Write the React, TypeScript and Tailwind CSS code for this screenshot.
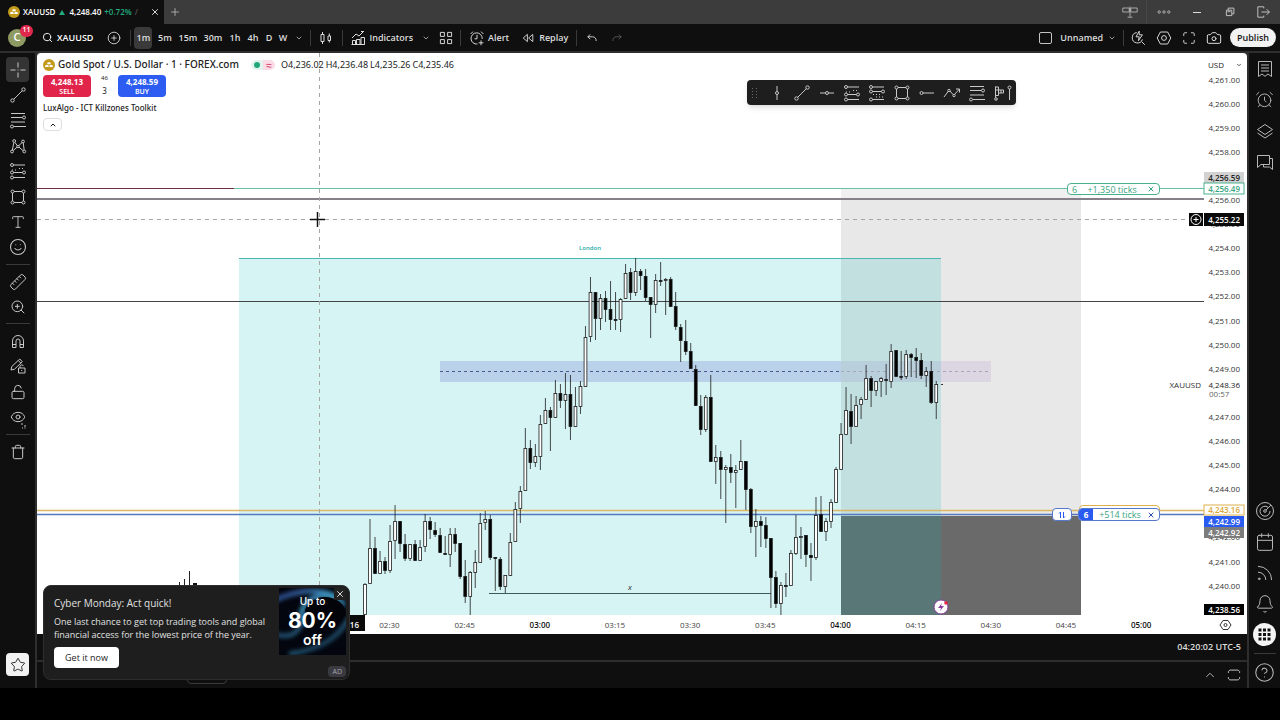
import type { ReactNode } from "react";
import {
  AlarmClock,
  Bell,
  Calendar,
  Camera,
  ChevronDown,
  ChevronUp,
  CircleHelp,
  CirclePlus,
  Eye,
  LockOpen,
  Maximize,
  Plus,
  Rss,
  Ruler,
  Search,
  Smile,
  Star,
  Trash,
  Type,
  X,
  ZoomIn,
} from "lucide-react";

// high, body top, body bottom, low, 1 = filled
type Candle = [number, number, number, number, 0 | 1];

const FIRST_X = 364.5;
const STEP = 5.011;

// one per minute from 02:25
const CANDLES: Candle[] = [
  [583, 584, 615, 615, 0], [519, 548, 584, 584, 0], [537, 548, 574, 574, 1], [551, 561, 574, 574, 0],
  [557, 561, 571, 574, 1], [525, 541, 571, 573, 0], [505, 521, 541, 559, 0], [521, 521, 544, 552, 1],
  [534, 544, 559, 561, 1], [544, 544, 559, 561, 0], [540, 544, 561, 561, 1], [540, 547, 561, 561, 0],
  [514, 521, 547, 552, 0], [517, 521, 530, 539, 1], [522, 530, 535, 537, 1], [528, 535, 553, 553, 1],
  [536, 553, 555, 555, 1], [528, 534, 555, 567, 0], [528, 534, 544, 552, 1], [543, 543, 577, 579, 1],
  [560, 576, 597, 603, 1], [571, 572, 597, 615, 0], [550, 562, 573, 588, 0], [513, 523, 563, 563, 0],
  [511, 519, 523, 530, 0], [515, 519, 558, 560, 1], [557, 557, 559, 591, 1], [557, 559, 587, 590, 1],
  [575, 575, 587, 593, 0], [533, 542, 576, 576, 0], [502, 509, 542, 542, 0], [486, 491, 509, 523, 0],
  [428, 448, 491, 491, 0], [440, 448, 463, 469, 1], [444, 456, 463, 467, 0], [415, 424, 457, 470, 0],
  [398, 410, 424, 424, 0], [407, 410, 418, 451, 1], [380, 393, 418, 418, 0], [384, 393, 401, 408, 1],
  [373, 394, 401, 429, 0], [375, 394, 427, 440, 1], [387, 406, 427, 427, 0], [381, 386, 407, 414, 0],
  [326, 337, 387, 387, 0], [277, 292, 337, 342, 0], [292, 292, 319, 340, 1], [294, 298, 319, 330, 0],
  [291, 298, 310, 322, 1], [281, 309, 320, 330, 1], [292, 319, 321, 330, 1], [298, 299, 320, 332, 0],
  [264, 273, 299, 299, 0], [268, 272, 293, 300, 1], [258, 271, 293, 296, 0], [269, 271, 276, 290, 1],
  [269, 276, 298, 301, 1], [297, 297, 305, 338, 1], [274, 280, 305, 313, 0], [262, 280, 281, 286, 1],
  [278, 279, 281, 315, 0], [277, 279, 307, 307, 1], [292, 306, 327, 330, 1], [324, 327, 341, 362, 1],
  [320, 341, 352, 355, 1], [343, 351, 369, 369, 1], [365, 369, 406, 406, 1], [395, 406, 430, 435, 1],
  [395, 397, 430, 432, 0], [375, 397, 462, 462, 1], [445, 457, 462, 484, 0], [451, 457, 470, 499, 1],
  [465, 467, 470, 523, 0], [454, 467, 473, 483, 1], [465, 470, 473, 508, 0], [440, 461, 470, 470, 0],
  [461, 461, 490, 510, 1], [488, 489, 527, 533, 1], [509, 521, 527, 557, 0], [516, 521, 526, 547, 1],
  [517, 525, 539, 548, 1], [538, 538, 578, 608, 1], [571, 577, 604, 608, 1], [582, 585, 604, 615, 0],
  [573, 585, 586, 597, 1], [550, 553, 586, 586, 0], [515, 537, 554, 555, 0], [527, 536, 538, 559, 0],
  [535, 535, 555, 567, 1], [543, 555, 558, 581, 1], [497, 515, 558, 560, 0], [496, 514, 532, 532, 1],
  [518, 521, 532, 541, 0], [499, 502, 522, 528, 0], [467, 469, 503, 503, 0], [423, 434, 470, 470, 0],
  [387, 410, 435, 435, 0], [394, 411, 427, 444, 1], [396, 405, 427, 427, 0], [397, 399, 405, 419, 0],
  [365, 378, 400, 400, 0], [376, 378, 391, 407, 1], [381, 381, 391, 396, 0], [377, 378, 382, 397, 0],
  [364, 379, 381, 395, 1], [344, 351, 382, 388, 0], [350, 350, 377, 377, 1], [351, 376, 377, 380, 1],
  [350, 354, 377, 379, 0], [353, 354, 358, 377, 1], [348, 357, 361, 378, 1], [353, 360, 376, 379, 1],
  [367, 371, 376, 387, 0], [361, 371, 403, 404, 1], [381, 384, 403, 419, 0],
];

const TIMES = ["02:30", "02:45", "03:00", "03:15", "03:30", "03:45", "04:00", "04:15", "04:30", "04:45", "05:00"];

const PRICES = [
  4261, 4260, 4259, 4258, 4256, 4255, 4254, 4253, 4252, 4251, 4250, 4249, 4247, 4246, 4245, 4244, 4242, 4241, 4240,
];

const priceY = (p: number) => 79.5 + (4261 - p) * 24.1;
const priceText = (p: number) => `4,${p - 4000}.00`;

function Glyph({ children, className = "size-5" }: { children: ReactNode; className?: string }) {
  return (
    <svg viewBox="0 0 20 20" className={`shrink-0 ${className}`} fill="none" stroke="currentColor" strokeWidth="1">
      {children}
    </svg>
  );
}

const CrossGlyph = () => (
  <Glyph><path d="M10 2.5v5M10 12.5v5M2.5 10h5M12.5 10h5M9.5 10h1" /></Glyph>
);
const TrendGlyph = () => (
  <Glyph>
    <circle cx="4.5" cy="15.5" r="1.7" /><circle cx="15.5" cy="4.5" r="1.7" /><path d="M5.7 14.3 14.3 5.7" />
  </Glyph>
);
const FibGlyph = () => (
  <Glyph>
    <path d="M3 3.5h14M3 7.5h11.3M3 12h14M5.7 16.5H18" /><circle cx="16" cy="7.5" r="1.5" /><circle cx="4" cy="16.5" r="1.5" />
  </Glyph>
);
const PatternGlyph = () => (
  <Glyph>
    <path d="m4.3 14.2 1.5-7.5M7 6.5l2.3 3.2M10.7 9.7l3.4-3.2M15.2 6.8l1 7.4M5.2 14.5l4-3.4M11 11.2l4.2 3.5" />
    <circle cx="4" cy="15.5" r="1.4" /><circle cx="6.2" cy="5" r="1.4" /><circle cx="10" cy="10.5" r="1.2" />
    <circle cx="15" cy="5.5" r="1.4" /><circle cx="16.3" cy="15.5" r="1.4" />
  </Glyph>
);
const PositionGlyph = ({ flip = false }: { flip?: boolean }) => (
  <Glyph>
    <circle cx="4" cy="4" r="1.5" /><path d="M5.5 4H17" />
    {flip ? (
      <>
        <path d="M5.5 8.5h9M5.5 16.5H17" /><circle cx="4" cy="8.5" r="1.5" /><circle cx="16" cy="8.5" r="1.5" />
        <circle cx="4" cy="16.5" r="1.5" /><path d="M6 11.5h9M9 14h8" strokeDasharray="1 2" />
      </>
    ) : (
      <>
        <path d="M5.5 11.5h9M5.5 16.5H17" /><circle cx="4" cy="11.5" r="1.5" />
        <circle cx="16" cy="11.5" r="1.5" /><circle cx="4" cy="16.5" r="1.5" />
        <path d="M4 9h5M11 7.5h6" strokeDasharray="1 2" />
      </>
    )}
  </Glyph>
);
const RectGlyph = () => (
  <Glyph>
    <path d="M6 4.5h8M6 15.5h8M4.5 6v8M15.5 6v8" />
    <circle cx="4.5" cy="4.5" r="1.5" /><circle cx="15.5" cy="4.5" r="1.5" />
    <circle cx="4.5" cy="15.5" r="1.5" /><circle cx="15.5" cy="15.5" r="1.5" />
  </Glyph>
);
const MagnetGlyph = () => (
  <Glyph>
    <path d="M4.5 16.5V10a5.5 5.5 0 0 1 11 0v6.5h-3.5V10a2 2 0 0 0-4 0v6.5ZM4.5 13.5H8M12 13.5h3.5" />
  </Glyph>
);
const PencilLockGlyph = () => (
  <Glyph>
    <path d="m3 14 .8-3.5 8-7.5 2.5 2.7-7.8 7.5ZM10.3 4.5l2.5 2.6M10.5 12h6.5v5h-6.5zM12 12v-1.5a1.7 1.7 0 0 1 3.3-.5M13.7 14v1" />
  </Glyph>
);
const EyeGlyph = () => (
  <div className="relative">
    <Eye className="size-4" strokeWidth={1.5} />
    <svg viewBox="0 0 6 6" className="absolute right-0 -bottom-1 size-[6px]" fill="none" stroke="currentColor">
      <path d="M1 1h2M2 5h1M4 3h2M4.5 5h1" />
    </svg>
  </div>
);

const TOOL_GROUPS: { h: string; tools: { name: string; icon: ReactNode }[] }[] = [
  {
    h: "h-[203px]",
    tools: [
      { name: "Cross", icon: <CrossGlyph /> },
      { name: "Trend line", icon: <TrendGlyph /> },
      { name: "Fib retracement", icon: <FibGlyph /> },
      { name: "Patterns", icon: <PatternGlyph /> },
      { name: "Long position", icon: <PositionGlyph /> },
      { name: "Rectangle", icon: <RectGlyph /> },
      { name: "Text", icon: <Type className="size-4" strokeWidth={1.4} /> },
      { name: "Emojis", icon: <Smile className="size-[18px]" strokeWidth={1.4} /> },
    ],
  },
  {
    h: "h-[50px]",
    tools: [
      { name: "Measure", icon: <Ruler className="size-[18px] -scale-x-100" strokeWidth={1.3} /> },
      { name: "Zoom in", icon: <ZoomIn className="size-4" strokeWidth={1.5} /> },
    ],
  },
  {
    h: "h-[102px]",
    tools: [
      { name: "Magnet", icon: <MagnetGlyph /> },
      { name: "Keep drawing", icon: <PencilLockGlyph /> },
      { name: "Lock drawings", icon: <LockOpen className="size-4" strokeWidth={1.5} /> },
      { name: "Hide drawings", icon: <EyeGlyph /> },
    ],
  },
  { h: "h-[25px]", tools: [{ name: "Remove", icon: <Trash className="size-4" strokeWidth={1.5} /> }] },
];

const FAVORITES: { name: string; icon: ReactNode }[] = [
  { name: "Vertical line", icon: <Glyph><path d="M10 3v5.5M10 11.5V17" /><circle cx="10" cy="10" r="1.5" /></Glyph> },
  { name: "Trend line", icon: <TrendGlyph /> },
  { name: "Horizontal line", icon: <Glyph><path d="M3 10h5.5M11.5 10H17" /><circle cx="10" cy="10" r="1.5" /></Glyph> },
  { name: "Long position", icon: <PositionGlyph /> },
  { name: "Short position", icon: <PositionGlyph flip /> },
  { name: "Rectangle", icon: <RectGlyph /> },
  { name: "Horizontal ray", icon: <Glyph><circle cx="4.5" cy="10" r="1.5" /><path d="M6 10h11" /></Glyph> },
  {
    name: "Path",
    icon: (
      <Glyph>
        <path d="m2 14 4.5-6M8 8l3 3.5M12.5 11.5 17.5 6M14 6h3.5v3.5" />
        <circle cx="7" cy="7.5" r="1.2" /><circle cx="12" cy="12.5" r="1.2" />
      </Glyph>
    ),
  },
  { name: "Fib retracement", icon: <FibGlyph /> },
  {
    name: "Volume profile",
    icon: (
      <Glyph>
        <path d="M3.5 3.5v11M3.5 4h3v3h5v3h-5M6.5 7h-3M3.5 12.5h3V7M9 7v3M17.5 6v11" />
        <circle cx="4" cy="16" r="1.3" /><circle cx="17.5" cy="4.5" r="1.5" />
      </Glyph>
    ),
  },
];

const SIDE_TOP: { name: string; icon: ReactNode }[] = [
  { name: "Watchlist", icon: <Glyph><path d="M3.5 2.5h13v15L13 15l-3 2.3L7 15l-3.5 2.5zM6 6h8M6 9h8M6 12h8" /></Glyph> },
  { name: "Alerts", icon: <AlarmClock className="size-[19px]" strokeWidth={1.2} /> },
  { name: "Object tree", icon: <Glyph><path d="m2.5 8.5 7.5-5 7.5 5-7.5 5zM2.5 12l7.5 5 7.5-5" /></Glyph> },
  { name: "Chats", icon: <Glyph><path d="M2.5 3.5h12v9H6l-3.5 3zM14.5 6.5h3v11l-3-2.5h-6v-2.5" /></Glyph> },
];

const SIDE_BOTTOM: { name: string; icon: ReactNode }[] = [
  {
    name: "Screeners",
    icon: (
      <Glyph>
        <circle cx="10" cy="10" r="8.5" /><path d="M13 6.2A5 5 0 1 0 15 10" /><circle cx="10" cy="10" r="1.3" /><path d="m11 9 5-5" />
      </Glyph>
    ),
  },
  { name: "Calendar", icon: <Calendar className="size-5" strokeWidth={1.2} /> },
  { name: "News", icon: <Rss className="size-5" strokeWidth={1.2} /> },
  { name: "Notifications", icon: <Bell className="size-5" strokeWidth={1.2} /> },
];

function Coin({ className }: { className: string }) {
  return (
    <svg viewBox="0 0 12 12" className={`shrink-0 ${className}`}>
      <circle cx="6" cy="6" r="6" fill="#c39a1c" />
      <path d="M4.8 3.2h2.4l.8 2H4zM2.6 6h2.6l.6 2H2zM6.8 6h2.6l.6 2H6.2z" fill="#fff" />
    </svg>
  );
}

const Divider = () => <div className="h-4 w-px shrink-0 bg-[#3a3a3a]" />;

function TitleBar() {
  return (
    <div className="flex h-6 items-center bg-[#3c3c3c] text-[#c4c4c4]">
      <div className="flex h-full w-[164px] items-center gap-[3px] bg-[#0f0f0f] pr-1 pl-2 text-[8px] font-semibold text-white">
        <Coin className="size-3" />
        <span>XAUUSD</span>
        <svg viewBox="0 0 6 5" className="mx-px w-[6px]"><path d="M3 0l3 5H0z" fill="#22ab7e" /></svg>
        <span>4,248.40</span>
        <span className="text-[#22ab7e]">+0.72%</span>
        <span className="text-[#555]">/</span>
        <button aria-label="Close tab" className="ml-auto"><X className="size-[10px]" /></button>
      </div>
      <button aria-label="New tab" className="ml-[5px]"><Plus className="size-3" strokeWidth={1.5} /></button>
      <div className="ml-auto flex items-center">
        <button aria-label="Link windows" className="w-8">
          <Glyph className="mx-auto size-4"><path d="M1 5h8v5H1zM11 5h8v5h-8zM10 3v13M7 16.5h6M9 7.5h2" /></Glyph>
        </button>
        <div className="h-6 w-px bg-[#484848]" />
        <button aria-label="More" className="w-[33px]">
          <Glyph className="mx-auto size-4"><circle cx="4" cy="10" r="1.5" /><circle cx="10" cy="10" r="1.5" /><circle cx="16" cy="10" r="1.5" /></Glyph>
        </button>
        <button aria-label="Minimize" className="w-[33px]"><div className="mx-auto h-px w-2 bg-[#ddd]" /></button>
        <button aria-label="Restore" className="w-[33px]">
          <Glyph className="mx-auto size-3"><path d="M4 7h9v9H4zM7 7V3.5h9.5V13H13M6 9.5h5" strokeWidth="1.6" /></Glyph>
        </button>
        <button aria-label="Exit" className="w-[34px]">
          <Glyph className="mx-auto size-4"><path d="M11 3.5H3.5v13H11M8 10h10M14.5 6.5 18 10l-3.5 3.5M11 3.5v2M11 14.5v2" strokeWidth="1.2" /></Glyph>
        </button>
      </div>
    </div>
  );
}

function Toolbar() {
  return (
    <div className="flex h-[27px] items-center justify-between bg-[#0f0f0f] text-[9px] font-semibold text-[#dcdcdc]">
      <div className="flex items-center">
        <button className="relative ml-2 grid size-[18px] place-items-center rounded-full bg-[#8f9a62] text-[11px] text-white">
          C
          <span className="absolute -top-1 left-3 grid h-3 w-[13px] place-items-center rounded-full bg-[#e0284d] text-[7px]">11</span>
        </button>
        <button className="ml-4 flex items-center gap-1 text-[9px] text-white">
          <Search className="size-[11px]" strokeWidth={2} />
          XAUUSD
        </button>
        <button aria-label="Compare symbols" className="mr-[9px] ml-[14px]"><CirclePlus className="size-[14px]" strokeWidth={1.5} /></button>
        <Divider />
        <button className="ml-[3px] h-[22px] w-[18px] rounded-sm bg-[#3a3a3a]">1m</button>
        <button className="w-[25px]">5m</button>
        <button className="w-[21px]">15m</button>
        <button className="w-[29px]">30m</button>
        <button className="w-[15px]">1h</button>
        <button className="w-[21px]">4h</button>
        <button className="w-[11px]">D</button>
        <button className="w-[17px]">W</button>
        <button aria-label="More intervals" className="mr-[7px] ml-1"><ChevronDown className="size-2" /></button>
        <Divider />
        <button aria-label="Chart style" className="mr-[6px] ml-[5px]">
          <Glyph className="size-5"><path d="M5 6.5h3v7H5zM6.5 4v2.5M6.5 13.5V16M12 8h2.5v4.5H12zM13.3 5.5V8M13.3 12.5v2" /></Glyph>
        </button>
        <Divider />
        <button className="ml-[5px] flex items-center gap-[1px]">
          <Glyph><path d="M4.5 16.5v-4h3v4M8.5 16.5v-5H12v5M13 16.5v-7h3.5v7zM3.5 16.5h13M4 10l4-4 3 2 4.5-4.5M13 3.5h3" /></Glyph>
          Indicators
        </button>
        <button aria-label="Favorite indicators" className="mr-[3px] ml-[9px]"><ChevronDown className="size-2" /></button>
        <button aria-label="Layout templates" className="mr-[6px] ml-[5px]">
          <Glyph className="size-4"><path d="M3 3h5v5H3zM12 3h5v5h-5zM3 12h5v5H3zM12 12h5v5h-5z" strokeWidth="1.2" /></Glyph>
        </button>
        <Divider />
        <button className="ml-2 flex items-center gap-[3px]">
          <Glyph className="size-4">
            <path d="M16.5 11a7 7 0 1 0-6 6.5M10 6v5H7M2 5l3-3M15 2l3 3M15 13v6M12 16h6" strokeWidth="1.2" />
          </Glyph>
          Alert
        </button>
        <button className="ml-[13px] flex items-center gap-[5px]">
          <Glyph className="size-3"><path d="M9 4v12l-7-6zM18 4v12l-7-6z" strokeWidth="1.5" /></Glyph>
          Replay
        </button>
        <div className="w-2" />
        <Divider />
        <button aria-label="Undo" className="ml-[9px]">
          <Glyph className="size-3"><path d="M7 4 3 8l4 4M3 8h8c4 0 6 3 6 7" strokeWidth="1.5" /></Glyph>
        </button>
        <button aria-label="Redo" className="ml-[13px] text-[#5a5a5a]">
          <Glyph className="size-3"><path d="m13 4 4 4-4 4M17 8H9c-4 0-6 3-6 7" strokeWidth="1.5" /></Glyph>
        </button>
      </div>
      <div className="flex items-center pr-1">
        <button className="flex items-center gap-2">
          <span className="h-3 w-[13px] rounded-[2px] border border-[#c4c4c4]" />
          Unnamed
        </button>
        <button aria-label="Manage layouts" className="mr-[7px] ml-[5px]"><ChevronDown className="size-2" /></button>
        <Divider />
        <button aria-label="Quick search" className="w-[27px]">
          <Glyph className="mx-auto size-4"><path d="M8.5 3.2a6.5 6.5 0 1 0 7 8.5M14.5 14.5l4 4M11.5 1.5 7.5 8.5h4l-1 5 5-7.5h-4z" strokeWidth="1.2" /></Glyph>
        </button>
        <button aria-label="Settings" className="w-[25px]">
          <Glyph className="mx-auto size-4"><path d="M5.5 2.5h9l4 7.5-4 7.5h-9L1.5 10z" strokeWidth="1.2" /><circle cx="10" cy="10" r="3" strokeWidth="1.2" /></Glyph>
        </button>
        <button aria-label="Fullscreen" className="w-[25px]"><Maximize className="mx-auto size-[14px]" strokeWidth={1.5} /></button>
        <button aria-label="Snapshot" className="w-[26px]"><Camera className="mx-auto size-4" strokeWidth={1.5} /></button>
        <button className="ml-[3px] h-[19px] rounded-full bg-[#f2f2f2] px-[7px] text-[#151515]">Publish</button>
      </div>
    </div>
  );
}

function LeftRail() {
  return (
    <nav className="flex w-[35px] shrink-0 flex-col items-center bg-[#0f0f0f] pt-1 text-[#c8c8c8]">
      {TOOL_GROUPS.map((group, g) => (
        <div key={g} className="flex flex-col items-center">
          {g > 0 && <div className="my-1 h-px w-6 bg-[#3a3a3a]" />}
          <div className={`flex flex-col justify-between ${group.h}`}>
            {group.tools.map(({ name, icon }) => (
              <button
                key={name}
                aria-label={name}
                className={`grid h-[25px] w-[23px] place-items-center rounded ${name === "Cross" ? "bg-[#343434]" : ""}`}
              >
                {icon}
              </button>
            ))}
          </div>
        </div>
      ))}
      <button aria-label="Favorites" className="mt-auto mb-3 grid size-[23px] place-items-center rounded bg-[#f2f2f2] text-[#222]">
        <Star className="size-4" strokeWidth={1.4} />
      </button>
    </nav>
  );
}

function RightRail() {
  return (
    <nav className="flex w-[31px] shrink-0 flex-col items-center bg-[#0f0f0f] text-[#b8b8b8]">
      {SIDE_TOP.map(({ name, icon }) => (
        <button key={name} aria-label={name} className="grid h-[31px] w-full place-items-center">{icon}</button>
      ))}
      <div className="mt-auto" />
      {SIDE_BOTTOM.map(({ name, icon }) => (
        <button key={name} aria-label={name} className="grid h-[31px] w-full place-items-center">{icon}</button>
      ))}
      <button aria-label="Products" className="grid h-[31px] w-full place-items-center">
        <svg viewBox="0 0 23 23" className="size-[23px]">
          <circle cx="11.5" cy="11.5" r="11.5" fill="#f4f4f4" />
          <path d="M5.5 5.5h3v3h-3zM10 5.5h3v3h-3zM14.5 5.5h3v3h-3zM5.5 10h3v3h-3zM10 10h3v3h-3zM14.5 10h3v3h-3zM5.5 14.5h3v3h-3zM10 14.5h3v3h-3zM14.5 14.5h3v3h-3z" fill="#111" />
        </svg>
      </button>
      <div className="my-[3px] h-px w-[22px] bg-[#3a3a3a]" />
      <button aria-label="Help" className="grid h-[31px] w-full place-items-center">
        <CircleHelp className="size-[21px]" strokeWidth={1.2} />
      </button>
    </nav>
  );
}

function PriceTag({ y, h, text, fill, stroke, color }: { y: number; h: number; text: string; fill: string; stroke?: string; color: string }) {
  return (
    <g>
      <rect x="1204" y={y} width="40" height={h} fill={fill} stroke={stroke ?? "none"} />
      <text x="1240" y={y + h / 2 + 3} textAnchor="end" fill={color} className="font-semibold">{text}</text>
    </g>
  );
}

function Plot() {
  return (
    <svg
      viewBox="37 53 1210 581"
      preserveAspectRatio="none"
      className="block size-full text-[8px] font-medium"
      role="img"
      aria-label="XAUUSD one minute chart"
    >
      <rect x="841" y="189" width="240" height="10" fill="#f0f0f0" />
      <rect x="841" y="199" width="240" height="317" fill="#e8e8e8" />
      <rect x="841" y="516" width="240" height="99" fill="#6a6a6a" />
      <rect x="239" y="258" width="702" height="357" fill="#00bcbc" fillOpacity="0.16" />
      <path d="M239 258.5h702" stroke="#4db5b0" />
      <rect x="440" y="361" width="401" height="21" fill="#4a4cc0" fillOpacity="0.2" />
      <rect x="841" y="361" width="150" height="21" fill="#783cbe" fillOpacity="0.1" />
      <path d="M440 371.5h401" stroke="#4a5a90" strokeDasharray="3 3" />
      <path d="M841 371.5h150" stroke="#a5a5bb" strokeDasharray="3 3" />

      <path d="M37 188.5h1167" stroke="#6cc0a0" />
      <path d="M37 188.5h197" stroke="#6b2f48" />
      <path d="M37 199h1167" stroke="#85808a" strokeWidth="2" />
      <path d="M37 301.5h1167" stroke="#444" />
      <path d="M37 510.5h1167" stroke="#dcb866" strokeWidth="1.5" />
      <path d="M37 514.5h1167" stroke="#5577bb" strokeWidth="1.5" />
      <path d="M489 593.5h282" stroke="#3b5a5e" />
      <path d="M37 219.5h1167M319.5 53v562" stroke="#a5a5a5" strokeDasharray="4 4" />

      <path d="M179.5 582v20M184.5 579v20M189.5 571v30" stroke="#222" />
      <rect x="193" y="583" width="4" height="20" fill="#111" />
      {CANDLES.map(([high, top, bottom, low, filled], i) => {
        const x = FIRST_X + i * STEP + 0.5;
        return (
          <g key={i} stroke="#1c1c1c" strokeWidth="0.8">
            <path d={`M${x} ${high}V${low}`} />
            <rect
              x={x - 1.4}
              y={top + 0.5}
              width="2.8"
              height={Math.max(bottom - top - 1, 1)}
              fill={filled ? "#000" : "#fff"}
            />
          </g>
        );
      })}
      <path d="M941 384.5h2" stroke="#333" />
      <text x="590" y="250" textAnchor="middle" fill="#1aa8a4" className="text-[6px] font-semibold">London</text>
      <text x="630" y="590" textAnchor="middle" fill="#333" className="text-[8px] italic">x</text>
      <path d="M317.5 212v15M310 219.5h15" stroke="#111" strokeWidth="1.5" />

      <circle cx="941" cy="607" r="7" fill="#fff" stroke="#8a3d9e" />
      <path d="m942 603-4 5h3l-1 3 4-5h-3z" fill="#8a3d9e" />
      <circle cx="946" cy="603" r="1.8" fill="#e8284d" />

      {/* time scale */}
      {TIMES.map((t, i) => (
        <text
          key={t}
          x={389.5 + i * 75.165}
          y="628"
          textAnchor="middle"
          fill={t.endsWith(":00") ? "#111" : "#444"}
          className={t.endsWith(":00") ? "font-semibold" : ""}
        >
          {t}
        </text>
      ))}
      <rect x="274" y="615" width="91" height="16" fill="#0a0a0a" />
      <text x="359" y="628" textAnchor="end" fill="#fff" className="font-semibold">02:16</text>

      {/* price scale */}
      {PRICES.map((p) => (
        <text key={p} x="1240" y={priceY(p) + 3} textAnchor="end" fill="#333">{priceText(p)}</text>
      ))}
      <PriceTag y={172} h={11} text="4,256.59" fill="#d2d2d2" color="#222" />
      <PriceTag y={183} h={11} text="4,256.49" fill="#fff" stroke="#49b08e" color="#3aa582" />
      <PriceTag y={213} h={13} text="4,255.22" fill="#0a0a0a" color="#fff" />
      <rect x="1189" y="213" width="14" height="13" fill="#0a0a0a" />
      <g fill="none" stroke="#fff"><circle cx="1196" cy="219.5" r="5" /><path d="M1193.5 219.5h5M1196 217v5" /></g>
      <text x="1201" y="388" textAnchor="end" fill="#333">XAUUSD</text>
      <text x="1240" y="388" textAnchor="end" fill="#222">4,248.36</text>
      <text x="1209" y="397" fill="#666">00:57</text>
      <PriceTag y={505} h={10} text="4,243.16" fill="#fff" stroke="#e0b04c" color="#dba837" />
      <PriceTag y={516} h={11} text="4,242.99" fill="#2a5bf0" color="#fff" />
      <PriceTag y={527} h={11} text="4,242.92" fill="#7c7c7c" color="#fff" />
      <PriceTag y={604} h={11} text="4,238.56" fill="#000" color="#fff" />
      <g fill="none" stroke="#333"><path d="M1223 620.5h5l3 4.5-3 4.5h-5l-3-4.5z" /><circle cx="1225.5" cy="625" r="1.5" /></g>
    </svg>
  );
}

function Legend() {
  return (
    <div className="absolute top-1 left-[6px] font-['Noto_Sans',sans-serif] text-[#222]">
      <div className="flex h-[15px] items-center text-[9px]">
        <Coin className="size-3" />
        <h1 className="ml-[3px] text-[10px] font-medium">Gold Spot / U.S. Dollar · 1 · FOREX.com</h1>
        <span className="ml-3 grid h-[10px] w-3 place-items-center rounded-l-full bg-[#e2f4ee]">
          <span className="size-[6px] rounded-full bg-[#1fa67a]" />
        </span>
        <span className="grid h-[10px] w-3 place-items-center rounded-r-full bg-[#fbdce6] text-[10px] leading-none text-[#d02858]">≈</span>
        <div className="ml-[6px] flex gap-[2px]">
          <span>O4,236.02</span>
          <span>H4,236.48</span>
          <span>L4,235.26</span>
          <span>C4,235.46</span>
        </div>
      </div>
      <div className="mt-[3px] flex items-center text-[8px] leading-[9px]">
        <button className="h-[22px] w-12 rounded bg-[#e0244a] font-bold text-white">
          4,248.13<br /><span className="text-[7px] font-semibold">SELL</span>
        </button>
        <div className="flex h-[22px] w-[27px] flex-col items-center justify-between">
          <span className="text-[6px] leading-[7px]">46</span>
          <span className="leading-3">3</span>
        </div>
        <button className="h-[22px] w-12 rounded bg-[#2c5cf2] font-bold text-white">
          4,248.59<br /><span className="text-[7px] font-semibold">BUY</span>
        </button>
      </div>
      <div className="mt-[5px] text-[8px] leading-3 font-medium">LuxAlgo - ICT Killzones Toolkit</div>
      <button aria-label="Collapse legend" className="mt-1 grid h-[13px] w-[19px] place-items-center rounded-sm border border-[#ddd]">
        <ChevronUp className="size-2" strokeWidth={3} />
      </button>
    </div>
  );
}

function OrderLabels() {
  return (
    <>
      <div className="absolute top-[130px] right-[87px] flex h-3 w-[93px] items-center justify-between rounded-sm border border-[#49b08e] bg-white px-1 text-[9px] leading-none font-medium text-[#3aa582]">
        <span>6</span>
        <span>+1,350 ticks</span>
        <button aria-label="Cancel take profit"><X className="size-2" strokeWidth={3} /></button>
      </div>
      <div className="absolute top-[452px] right-[87px] h-3 w-[81px] rounded-sm border border-[#e0b04c] bg-white" />
      <div className="absolute top-[455px] right-[87px] flex h-[13px] items-center gap-[6px] text-[9px] leading-none font-medium">
        <button className="h-[13px] w-5 rounded-sm border border-[#5577cc] bg-white text-[#2a5bf0]" aria-label="Reverse position">
          <Glyph className="mx-auto size-[10px]"><path d="M4 7l3-3v12M16 13l-3 3V4" strokeWidth="2" /></Glyph>
        </button>
        <div className="flex h-[13px] w-[82px] items-center justify-between overflow-hidden rounded-sm border border-[#5577cc] bg-white pr-1 text-[#3aa582]">
          <span className="grid h-full w-[14px] place-items-center bg-[#2a5bf0] text-[8px] font-bold text-white">6</span>
          <span>+514 ticks</span>
          <button aria-label="Close position" className="text-[#2a4bb0]"><X className="size-2" strokeWidth={3} /></button>
        </div>
      </div>
    </>
  );
}

function FavoritesBar() {
  return (
    <div className="absolute top-[27px] right-[231px] flex h-[25px] w-[269px] items-center overflow-hidden rounded bg-[#1e1e1e] pl-[5px] text-[#c8c8c8] shadow-md">
      <svg viewBox="0 0 6 10" className="mr-[6px] w-[6px] shrink-0" fill="#666">
        <path d="M0 0h1v1H0zM4 0h1v1H4zM0 3h1v1H0zM4 3h1v1H4zM0 6h1v1H0zM4 6h1v1H4zM0 9h1v1H0zM4 9h1v1H4z" />
      </svg>
      {FAVORITES.map(({ name, icon }) => (
        <button key={name} aria-label={name} className="grid h-full w-[25px] shrink-0 place-items-center">{icon}</button>
      ))}
    </div>
  );
}

function Promo() {
  return (
    <aside className="absolute bottom-2 left-[6px] flex h-[95px] w-[307px] justify-between rounded-lg border border-[#2e2e2e] bg-[#1e1e1e] pt-[2px] pr-[3px] pl-[10px] text-[#e0e0e0]">
      <div className="pt-2">
        <h2 className="text-[10px] leading-[15px] font-medium">Cyber Monday: Act quick!</h2>
        <p className="mt-1 text-[9px] leading-[13px] font-medium whitespace-nowrap">
          One last chance to get top trading tools and global
          <br />
          financial access for the lowest price of the year.
        </p>
        <button className="mt-[6px] h-[21px] w-[65px] rounded bg-white text-[9px] font-medium text-[#222]">Get it now</button>
      </div>
      <div className="flex flex-col items-end justify-between pb-[2px]">
        <div className="relative size-[67px] overflow-hidden bg-[#03060f] text-center font-bold text-white">
          <svg viewBox="0 0 67 67" className="absolute inset-0">
            <defs>
              <linearGradient id="swirl" x1="0" y1="0" x2="1" y2="1">
                <stop offset="0" stopColor="#27307a" />
                <stop offset="0.5" stopColor="#3f9fc4" />
                <stop offset="1" stopColor="#0a1a40" />
              </linearGradient>
              <filter id="soft"><feGaussianBlur stdDeviation="2" /></filter>
            </defs>
            <g fill="none" stroke="url(#swirl)" filter="url(#soft)">
              <path d="M-4 12C18 2 50-4 66 18M22 38C18 14 40 0 58 12" strokeWidth="5" />
              <path d="M-4 46C14 52 24 42 24 24M10 66C40 62 60 50 70 30" strokeWidth="4" opacity="0.7" />
            </g>
            <ellipse cx="46" cy="24" rx="20" ry="15" fill="#02040a" />
          </svg>
          <div className="relative pt-[6px] font-['Inter',sans-serif]">
            <div className="text-[10px] leading-[14px] font-medium">Up to</div>
            <div className="text-[21px] leading-[25px]">80%</div>
            <div className="text-[14px] leading-[14px] font-semibold">off</div>
          </div>
          <button aria-label="Close ad" className="absolute top-0 right-0 grid size-3 place-items-center bg-[#222]">
            <X className="size-[10px]" strokeWidth={2} />
          </button>
        </div>
        <span className="rounded-sm bg-[#3a3a40] px-1 text-[7px] leading-[11px] font-medium text-[#a5a5b0]">AD</span>
      </div>
    </aside>
  );
}

export default function App() {
  return (
    <div className="flex h-screen flex-col bg-black pb-8 font-['Open_Sans',sans-serif]">
      <TitleBar />
      <Toolbar />
      <div className="flex min-h-0 flex-1 gap-[2px] bg-[#2e2e2e] pt-[2px]">
        <LeftRail />
        <main className="relative flex min-w-0 flex-1 flex-col">
          <div className="relative min-h-0 flex-1 overflow-hidden rounded-t bg-white">
            <Plot />
            <Legend />
            <div className="absolute top-1 right-1 flex h-4 w-[39px] items-center text-[8px] text-[#222]">
              <select aria-label="Currency" className="h-4 w-full appearance-none pl-1 font-medium"><option>USD</option></select>
              <ChevronDown className="pointer-events-none absolute right-px size-[6px]" strokeWidth={3} />
            </div>
            <FavoritesBar />
            <OrderLabels />
          </div>
          <div className="flex h-[26px] items-center justify-end bg-[#0f0f0f] pr-[6px] text-[9px] font-semibold text-[#dcdcdc]">
            04:20:02 UTC-5
          </div>
          <div className="mt-[2px] flex h-[26px] items-center justify-end gap-[10px] bg-[#0f0f0f] pr-[6px] text-[#c8c8c8]">
            <div className="mr-auto ml-[150px] h-[18px] w-10 rounded border border-[#3a3a3a]" />
            <button aria-label="Expand panel"><ChevronUp className="size-[14px]" strokeWidth={1.5} /></button>
            <button aria-label="Maximize panel">
              <Glyph className="size-[14px]"><path d="M2 7V5l2-2h3M13 3h3l2 2v2M18 13v2l-2 2h-3M7 17H4l-2-2v-2M7 3h6M7 17h6" strokeWidth="1.4" /></Glyph>
            </button>
          </div>
          <Promo />
        </main>
        <RightRail />
      </div>
    </div>
  );
}
